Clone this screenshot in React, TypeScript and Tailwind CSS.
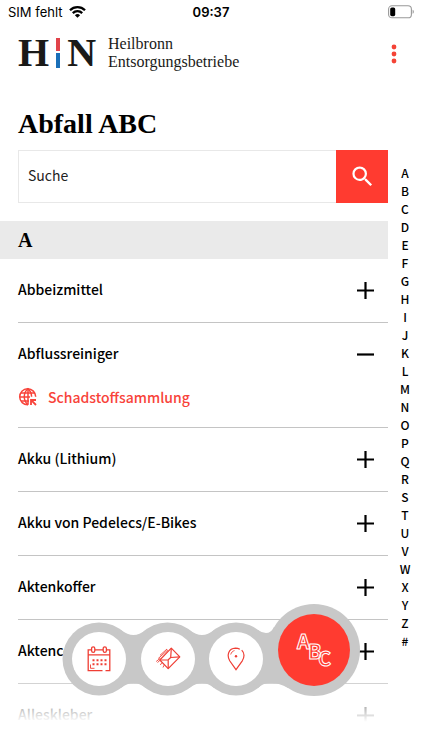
import React, { useState } from "react";
import { MdSearch } from "react-icons/md";

const entries = [
	{ id: 1, name: "Abbeizmittel", links: ["Schadstoffsammlung"] },
	{ id: 2, name: "Abflussreiniger", links: ["Schadstoffsammlung"] },
	{ id: 3, name: "Akku (Lithium)", links: ["Schadstoffsammlung"] },
	{ id: 4, name: "Akku von Pedelecs/E-Bikes", links: ["Schadstoffsammlung"] },
	{ id: 5, name: "Aktenkoffer", links: ["Schadstoffsammlung"] },
	{ id: 6, name: "Aktencover", links: ["Schadstoffsammlung"] },
	{ id: 7, name: "Alleskleber", links: ["Schadstoffsammlung"] },
];

const letters = "ABCDEFGHIJKLMNOPQRSTUVWXYZ#".split("");

const StatusBar: React.FC = () => (
	<div className="grid grid-cols-3 items-center h-6 px-2 font-['Inter',sans-serif] text-[13px] leading-4 text-black">
		<div className="flex items-center gap-1.5">
			<span>SIM fehlt</span>
			<svg width="17" height="12" viewBox="0 0 17 12" fill="none" stroke="#000" strokeWidth="2.3">
				<path d="M1 4.3a10.6 10.6 0 0 1 15 0" />
				<path d="M3.8 7.1a6.7 6.7 0 0 1 9.4 0" />
				<path d="M8.5 11.8 5.9 9.2a3.7 3.7 0 0 1 5.2 0z" fill="#000" stroke="none" />
			</svg>
		</div>
		<span className="text-center font-semibold">09:37</span>
		<svg className="justify-self-end" width="26" height="14" viewBox="0 0 26 14">
			<rect x="0.6" y="0.8" width="22.8" height="12" rx="3.4" fill="none" stroke="#999" strokeWidth="1.1" />
			<rect x="2.2" y="2.4" width="5" height="8.8" rx="1.6" fill="#000" />
			<path d="M24.600 4.800c1.600.4 1.600 3.600 0 4z" fill="#999" />
		</svg>
	</div>
);

const Header: React.FC = () => (
	<header className="flex items-center justify-between px-[18px] h-[60px]">
		<a href="#start" className="flex items-center gap-3 pb-0.5">
			<span className="flex items-center gap-[7px] font-['Liberation_Serif',serif] font-bold text-[40px] leading-[44px] text-[#1a1a18]">
				<span>H</span>
				<svg width="4" height="30" viewBox="0 0 4 30">
					<rect width="4" height="13" fill="#e1434a" />
					<rect y="15" width="4" height="15" fill="#1a6fb8" />
				</svg>
				<span>N</span>
			</span>
			<span className="font-['Liberation_Serif',serif] text-base leading-[18px] text-[#1a1a18]">
				Heilbronn
				<br />
				Entsorgungsbetriebe
			</span>
		</a>
		<button aria-label="Menü" className="flex w-5 justify-center">
			<svg width="6" height="20" viewBox="0 0 6 20" fill="#f44336">
				<circle cx="3" cy="3" r="2.4" />
				<circle cx="3" cy="10" r="2.4" />
				<circle cx="3" cy="17" r="2.4" />
			</svg>
		</button>
	</header>
);

const GlobeIcon: React.FC = () => (
	<svg width="20" height="20" viewBox="0 0 20 20" fill="none" stroke="#f8433a" strokeWidth="1.5">
		<path d="M10 17.8A8 8 0 1 1 17.7 9.8" />
		<path d="M10 17.8C5 13.5 5 6 10 1.8C12.4 3.8 13.6 6.5 13.6 9.8" />
		<path d="M10 1.8v16M3 6h14M2 10h10M3 14h8" />
		<path d="M18 13h-5v5M13.2 13.2l4.800 4.800" strokeWidth="1.8" />
	</svg>
);

const CalendarIcon: React.FC = () => (
	<svg width="24" height="26" viewBox="0 0 24 26" fill="none" stroke="#ef3e34" strokeWidth="1.3">
		<path d="M4.5 3.8H1.2v20.900h14.300M18.500 24.700h4.300V3.800h-3.300M8 3.800h8M1.200 8.800h21.600" />
		<rect x="4.600" y="0.8" width="3.2" height="5.6" rx="1.6" />
		<rect x="16.200" y="0.8" width="3.2" height="5.6" rx="1.6" />
		<path d="M5.500 14.200h14M5.500 18.200h14" strokeWidth="2" strokeDasharray="2 2" />
		<path d="M3.500 18.500v3.800h4" strokeWidth="0.9" />
	</svg>
);

const MailIcon: React.FC = () => (
	<svg width="26" height="24" viewBox="0 0 26 24" fill="none" stroke="#ef3e34" strokeWidth="1.2" strokeLinejoin="round">
		<path d="M16.300 1.200 24.800 9.800 13.200 21.600 4.800 13z" />
		<path d="M16.300 1.200 15.700 10.500 24.800 9.800M15.700 10.500 13.200 12.800 4.800 13M13.200 12.800v8.800" />
		<path d="M13 2.800 3.200 11.500M12 2 5 8.300M1.200 14.500l4-3.200M2.500 15.500l2.300-2M5.300 18l1.500-2.200M8 20.500l1-2.300" strokeWidth="0.9" />
	</svg>
);

const PinIcon: React.FC = () => (
	<svg width="18" height="24" viewBox="0 0 18 24" fill="none" stroke="#ef3e34" strokeWidth="1.2">
		<path d="M14.700 3.200C17.500 6 17.500 10 15.300 13.800L9 22.600 2.700 13.800C-.5 8 1.500 1.500 8.500 1.200c1.700 0 3 .3 4.300 1" />
		<path d="M3.700 7.500C4.300 5.400 5.700 4 7.500 3.600" strokeWidth="0.9" />
		<circle cx="9" cy="9.200" r="1.2" fill="#ef3e34" stroke="none" />
	</svg>
);

const AbcIcon: React.FC = () => (
	<svg
		width="48"
		height="56"
		viewBox="0 0 48 56"
		className="font-['Noto_Sans_CJK_SC',sans-serif] font-bold"
		fill="none"
		stroke="#fff"
		strokeWidth="1"
		strokeLinejoin="round"
		fontSize="20"
	>
		<text x="7" y="27">A</text>
		<text x="18" y="37">B</text>
		<text x="28" y="44">C</text>
	</svg>
);

const BottomNav: React.FC = () => (
	<nav className="absolute bottom-[54px] left-1/2 -translate-x-1/2 w-[298px] h-[92px]">
		<svg className="absolute inset-0" width="298" height="92" viewBox="62 604 298 92" fill="#c8c8c8">
			<circle cx="99" cy="659" r="36.5" />
			<circle cx="167.5" cy="659" r="36.5" />
			<circle cx="236" cy="659" r="36.5" />
			<circle cx="314" cy="650" r="46" />
			<path d="M99 650 121 630Q127.500 635 133.500 635T145.500 630L167.500 650 189.500 630Q196 635 202 635T214 630L236 650 258 630Q262 633 266 633 271 633 274 627L314 650 288 688Q279 683 272 683H270Q263 683 258 688L236 670 214 688Q208 683 202 683T189.500 688L167.500 670 145.500 688Q139.500 683 133.500 683T121 688L99 670z" />
		</svg>
		<div className="relative flex items-end justify-between h-full px-[10px] pb-[10px]">
			<button aria-label="Kalender" className="flex items-center justify-center w-[54px] h-[54px] rounded-full bg-white">
				<CalendarIcon />
			</button>
			<button aria-label="Nachrichten" className="flex items-center justify-center w-[54px] h-[54px] rounded-full bg-white">
				<MailIcon />
			</button>
			<button aria-label="Standorte" className="flex items-center justify-center w-[54px] h-[54px] rounded-full bg-white">
				<PinIcon />
			</button>
			<button aria-label="Abfall ABC" className="flex items-center justify-center w-[72px] h-[72px] rounded-full bg-[#ff3b30]">
				<AbcIcon />
			</button>
		</div>
	</nav>
);

const App: React.FC = () => {
	const [openId, setOpenId] = useState<number | null>(2);

	return (
		<div className="relative h-screen overflow-hidden bg-white text-black font-['Noto_Sans_CJK_SC',sans-serif]">
			<StatusBar />
			<Header />
			<div className="flex">
				<main className="flex-1 min-w-0">
					<h1 className="pl-[18px] pt-6 font-['Liberation_Serif',serif] font-bold text-[28px] leading-8">
						Abfall ABC
					</h1>
					<form className="flex ml-[18px] mt-[10px] h-[53px]" onSubmit={(e) => e.preventDefault()}>
						<input
							type="text"
							aria-label="Suche"
							placeholder="Suche"
							className="flex-1 min-w-0 px-[9px] pb-1 border border-r-0 border-[#e8e8e8] text-sm placeholder:text-[#222] outline-none"
						/>
						<button aria-label="Suchen" className="flex items-center justify-center w-[52px] bg-[#ff3b30] text-white">
							<MdSearch size={27} />
						</button>
					</form>
					<h2 className="mt-[18px] pl-[18px] h-[38px] bg-[#eaeaea] font-['Liberation_Serif',serif] font-bold text-xl leading-[38px]">
						A
					</h2>
					<ul className="ml-[18px]">
						{entries.map((entry) => {
							const open = entry.id === openId;
							return (
								<li key={entry.id} className="border-b border-[#c4c4c4]">
									<button
										aria-expanded={open}
										onClick={() => setOpenId(open ? null : entry.id)}
										className="flex items-center justify-between w-full h-[63px] pr-[14px] text-sm font-medium"
									>
										<span className="pb-1">{entry.name}</span>
										<svg width="17" height="17" viewBox="0 0 17 17" stroke="#000" strokeWidth="2.2">
											<path d={open ? "M0 8.500h17" : "M0 8.500h17M8.500 0v17"} />
										</svg>
									</button>
									{open &&
										entry.links.map((link) => (
											<a
												key={link}
												href="#schadstoffsammlung"
												className="flex items-start gap-[10px] h-[41px] text-sm leading-[22px] font-medium text-[#f8433a]"
											>
												<span className="flex items-center h-[22px]">
													<GlobeIcon />
												</span>
												{link}
											</a>
										))}
								</li>
							);
						})}
					</ul>
				</main>
				<aside className="flex flex-col items-center w-[34px] pt-20 text-xs leading-[18px] font-medium">
					{letters.map((letter) => (
						<a key={letter} href={`#${letter}`}>
							{letter}
						</a>
					))}
				</aside>
			</div>
			<div className="absolute inset-x-0 bottom-0 h-20 bg-linear-to-b from-transparent to-white to-65% pointer-events-none" />
			<BottomNav />
		</div>
	);
};

export default App;
